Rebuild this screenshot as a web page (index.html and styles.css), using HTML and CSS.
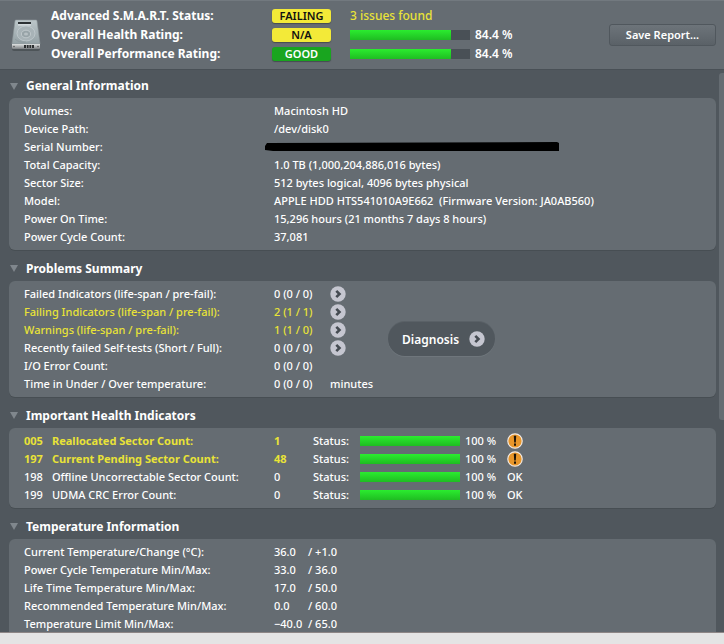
FILE: index.html
```html
<!DOCTYPE html>
<html lang="en">
<head>
  <meta charset="UTF-8">
  <meta name="viewport" content="width=device-width, initial-scale=1.0">
  <title>Drive Report</title>
  <link rel="stylesheet" href="styles.css">
</head>
<body>
  <!-- shared icons -->
  <svg class="defs" width="0" height="0" aria-hidden="true">
    <symbol id="arrow" viewBox="0 0 16 16">
      <circle cx="8" cy="8" r="7.7" fill="#c5c6d0"/>
      <path d="M6.3 4.8 L9.5 8 L6.3 11.2" fill="none" stroke="#454b52" stroke-width="2.6"/>
    </symbol>
    <symbol id="warn" viewBox="0 0 16 16">
      <circle cx="8" cy="8" r="7.2" fill="#e8962a" stroke="#f3e9e0" stroke-width="1.2"/>
      <path d="M6.8 2.8 H9.2 L8.8 9.6 H7.2 Z M7 10.6 H9 V12.8 H7 Z" fill="#1c1408"/>
    </symbol>
  </svg>

  <header class="summary">
    <svg class="drive" viewBox="0 0 32 36" aria-hidden="true">
      <defs>
        <linearGradient id="top" x1="0" y1="0" x2="0" y2="1">
          <stop offset="0" stop-color="#bcc6c9"/>
          <stop offset="1" stop-color="#94a1a5"/>
        </linearGradient>
        <linearGradient id="front" x1="0" y1="0" x2="0" y2="1">
          <stop offset="0" stop-color="#dfe2e2"/>
          <stop offset="1" stop-color="#7b7f82"/>
        </linearGradient>
      </defs>
      <rect x="2" y="30" width="28" height="4" rx="2" fill="#3e4448" opacity="0.6"/>
      <path d="M5 4 Q5 3 6 3 H26 Q27 3 27 4 L30 27 H2 Z" fill="url(#top)" stroke="#8d979b" stroke-width="0.6"/>
      <rect x="8" y="5" width="13" height="2" fill="#2c3134"/>
      <rect x="8" y="7.4" width="13" height="1" fill="#e6ecee"/>
      <ellipse cx="16" cy="16.5" rx="9" ry="7.5" fill="#a8b3b7" stroke="#c6cfd2" stroke-width="0.7"/>
      <ellipse cx="16" cy="17" rx="4.6" ry="3.8" fill="#98a4a8" stroke="#cbd3d5" stroke-width="0.7"/>
      <ellipse cx="16" cy="17" rx="2" ry="1.6" fill="#b7c0c3"/>
      <path d="M5 22 Q9 26 16 25" fill="none" stroke="#89959a" stroke-width="0.7"/>
      <path d="M2 27 H30 V31 Q30 32 29 32 H3 Q2 32 2 31 Z" fill="url(#front)"/>
      <path d="M14 28 H24 V31 H14 Z" fill="#2b2e30"/>
      <path d="M16.5 28 V31 M19 28 V31 M21.5 28 V31" stroke="#aeb2b4" stroke-width="0.8"/>
      <circle cx="4" cy="29.5" r="0.8" fill="#555"/>
      <circle cx="28" cy="29.5" r="0.8" fill="#555"/>
    </svg>
    <table class="ratings">
      <tr>
        <th scope="row">Advanced S.M.A.R.T. Status:</th>
        <td class="badge-cell"><span class="badge">FAILING</span></td>
        <td colspan="2" class="issues">3 issues found</td>
      </tr>
      <tr>
        <th scope="row">Overall Health Rating:</th>
        <td class="badge-cell"><span class="badge">N/A</span></td>
        <td class="bar-cell"><div class="bar"><div class="fill" style="width: 84.4%"></div></div></td>
        <td>84.4 %</td>
      </tr>
      <tr>
        <th scope="row">Overall Performance Rating:</th>
        <td class="badge-cell"><span class="badge good">GOOD</span></td>
        <td class="bar-cell"><div class="bar"><div class="fill" style="width: 84.4%"></div></div></td>
        <td>84.4 %</td>
      </tr>
    </table>
    <button type="button" class="save-btn">Save Report...</button>
  </header>

  <div class="scroller">
    <main class="content">
      <section>
        <h2>General Information</h2>
        <div class="panel">
          <table class="info">
            <tr><th scope="row">Volumes:</th><td>Macintosh HD</td></tr>
            <tr><th scope="row">Device Path:</th><td>/dev/disk0</td></tr>
            <tr>
              <th scope="row">Serial Number:</th>
              <td>
                <svg class="redacted" viewBox="0 0 294 10" role="img" aria-label="hidden">
                  <path d="M0 4 L2 1 L292 0 L294 1 V9 H8 L0 8 Z" fill="#000"/>
                </svg>
              </td>
            </tr>
            <tr><th scope="row">Total Capacity:</th><td>1.0 TB (1,000,204,886,016 bytes)</td></tr>
            <tr><th scope="row">Sector Size:</th><td>512 bytes logical, 4096 bytes physical</td></tr>
            <tr><th scope="row">Model:</th><td>APPLE HDD HTS541010A9E662&nbsp; (Firmware Version: JA0AB560)</td></tr>
            <tr><th scope="row">Power On Time:</th><td>15,296 hours (21 months 7 days 8 hours)</td></tr>
            <tr><th scope="row">Power Cycle Count:</th><td>37,081</td></tr>
          </table>
        </div>
      </section>

      <section>
        <h2>Problems Summary</h2>
        <div class="panel problems">
          <table class="info">
            <tr>
              <th scope="row">Failed Indicators (life-span / pre-fail):</th>
              <td class="count">0 (0 / 0)</td>
              <td><button type="button" class="go" aria-label="Show failed"><svg><use href="#arrow"/></svg></button></td>
            </tr>
            <tr class="alert">
              <th scope="row">Failing Indicators (life-span / pre-fail):</th>
              <td class="count">2 (1 / 1)</td>
              <td><button type="button" class="go" aria-label="Show failing"><svg><use href="#arrow"/></svg></button></td>
            </tr>
            <tr class="alert">
              <th scope="row">Warnings (life-span / pre-fail):</th>
              <td class="count">1 (1 / 0)</td>
              <td><button type="button" class="go" aria-label="Show warnings"><svg><use href="#arrow"/></svg></button></td>
            </tr>
            <tr>
              <th scope="row">Recently failed Self-tests (Short / Full):</th>
              <td class="count">0 (0 / 0)</td>
              <td><button type="button" class="go" aria-label="Show self-tests"><svg><use href="#arrow"/></svg></button></td>
            </tr>
            <tr>
              <th scope="row">I/O Error Count:</th>
              <td class="count">0 (0 / 0)</td>
              <td></td>
            </tr>
            <tr>
              <th scope="row">Time in Under / Over temperature:</th>
              <td class="count">0 (0 / 0)</td>
              <td>minutes</td>
            </tr>
          </table>
          <button type="button" class="diagnosis">Diagnosis <svg><use href="#arrow"/></svg></button>
        </div>
      </section>

      <section>
        <h2>Important Health Indicators</h2>
        <div class="panel">
          <table class="info health">
            <tr class="alert strong">
              <th scope="row"><span class="code">005</span>Reallocated Sector Count:</th>
              <td class="value">1</td>
              <td class="status">Status:</td>
              <td class="meter"><div class="bar"><div class="fill" style="width: 100%"></div></div></td>
              <td class="percent">100 %</td>
              <td><svg class="warn" role="img" aria-label="Warning"><use href="#warn"/></svg></td>
            </tr>
            <tr class="alert strong">
              <th scope="row"><span class="code">197</span>Current Pending Sector Count:</th>
              <td class="value">48</td>
              <td class="status">Status:</td>
              <td class="meter"><div class="bar"><div class="fill" style="width: 100%"></div></div></td>
              <td class="percent">100 %</td>
              <td><svg class="warn" role="img" aria-label="Warning"><use href="#warn"/></svg></td>
            </tr>
            <tr>
              <th scope="row"><span class="code">198</span>Offline Uncorrectable Sector Count:</th>
              <td class="value">0</td>
              <td class="status">Status:</td>
              <td class="meter"><div class="bar"><div class="fill" style="width: 100%"></div></div></td>
              <td class="percent">100 %</td>
              <td>OK</td>
            </tr>
            <tr>
              <th scope="row"><span class="code">199</span>UDMA CRC Error Count:</th>
              <td class="value">0</td>
              <td class="status">Status:</td>
              <td class="meter"><div class="bar"><div class="fill" style="width: 100%"></div></div></td>
              <td class="percent">100 %</td>
              <td>OK</td>
            </tr>
          </table>
        </div>
      </section>

      <section>
        <h2>Temperature Information</h2>
        <div class="panel">
          <table class="info">
            <tr><th scope="row">Current Temperature/Change (°C):</th><td class="temp">36.0</td><td>/ +1.0</td></tr>
            <tr><th scope="row">Power Cycle Temperature Min/Max:</th><td class="temp">33.0</td><td>/ 36.0</td></tr>
            <tr><th scope="row">Life Time Temperature Min/Max:</th><td class="temp">17.0</td><td>/ 50.0</td></tr>
            <tr><th scope="row">Recommended Temperature Min/Max:</th><td class="temp">0.0</td><td>/ 60.0</td></tr>
            <tr><th scope="row">Temperature Limit Min/Max:</th><td class="temp">−40.0</td><td>/ 65.0</td></tr>
          </table>
        </div>
      </section>
    </main>
    <div class="track"><div class="thumb"></div></div>
  </div>
  <footer class="bottom-bar"></footer>
</body>
</html>
```
FILE: styles.css
```css
* {
  box-sizing: border-box;
}
body {
  margin: 0;
  height: 100vh;
  display: flex;
  flex-direction: column;
  overflow: hidden;
  background: #50575d;
  color: #fff;
  font-family: "Noto Sans", "Open Sans", sans-serif;
  font-size: 11px;
  font-weight: 500;
  line-height: 18px;
}
.defs {
  position: absolute;
}
table {
  border-collapse: collapse;
}
th, td {
  padding: 0;
  text-align: left;
  white-space: nowrap;
}
button {
  font-family: inherit;
  color: inherit;
  cursor: pointer;
}

/* header */
.summary {
  display: flex;
  align-items: center;
  flex-shrink: 0;
  padding: 5px 8px 6px 10px;
  background: #656c72;
  border-top: 1px solid #72797f;
  border-bottom: 1px solid #495056;
}
.drive {
  width: 32px;
  height: 36px;
  margin-right: 9px;
}
.ratings {
  font-size: 12px;
  line-height: 19px;
}
.ratings tr {
  height: 19px;
}
.ratings th {
  width: 221px;
  font-size: 12px;
  font-weight: 700;
}
.ratings td {
  font-weight: 600;
}
.ratings .issues {
  color: #e9e337;
  font-weight: 500;
}
.badge-cell {
  width: 78px;
}
.badge {
  display: block;
  width: 59px;
  height: 14px;
  border-radius: 3px;
  background: #f3ea38;
  box-shadow: 0 1px 1px #454c52;
  color: #111;
  font-size: 11px;
  font-weight: 600;
  line-height: 14px;
  text-align: center;
}
.badge.good {
  background: #19a51f;
  color: #fff;
}
.bar-cell {
  width: 125px;
}
.bar {
  width: 120px;
  height: 10px;
  background: #495056;
}
.fill {
  height: 100%;
  background: linear-gradient(#2bec2f, #1fbd22);
}
.save-btn {
  width: 107px;
  height: 22px;
  margin-left: auto;
  padding: 0;
  border: 1px solid #50575d;
  border-radius: 3px;
  background: linear-gradient(#6d747a, #5a6167);
  font-size: 11px;
  font-weight: 600;
}

/* report */
.scroller {
  display: flex;
  flex: 1;
  min-height: 0;
  overflow: hidden;
}
.content {
  flex: 1;
  padding: 0 3px 0 9px;
}
h2 {
  display: flex;
  align-items: center;
  height: 31px;
  margin: 0;
  padding-top: 6px;
  font-size: 12px;
  font-weight: 700;
}
h2::before {
  content: "";
  width: 0;
  margin: 0 8px 0 1px;
  border: 4px solid transparent;
  border-top: 7px solid #80878d;
  border-bottom: 0;
}
section:first-child h2 {
  height: 28px;
  padding-top: 4px;
}
.panel {
  padding: 4px 15px;
  border-radius: 6px;
  background: #656c72;
  box-shadow: 0 1px 0 #474e53;
}
.info tr {
  height: 18px;
}
.info th {
  width: 250px;
  font-weight: 500;
}
.redacted {
  display: block;
  width: 294px;
  height: 10px;
  margin-left: -9px;
}
.alert th, .alert .count, .alert .value {
  color: #e9e337;
}
.strong th, .strong .value {
  font-weight: 700;
}
.count {
  width: 56px;
}
.problems {
  display: flex;
  align-items: center;
  gap: 15px;
}
.go {
  display: block;
  width: 16px;
  height: 16px;
  padding: 0;
  border: 0;
  background: none;
}
.go svg, .diagnosis svg, .warn {
  display: block;
  width: 16px;
  height: 16px;
}
.diagnosis {
  display: flex;
  align-items: center;
  justify-content: space-between;
  width: 107px;
  height: 34px;
  padding: 0 10px 0 14px;
  border: 0;
  border-radius: 17px;
  background: #50575d;
  box-shadow: 0 1px 0 #6f767c, 0 -1px 0 #5a6167;
  font-size: 12px;
  font-weight: 600;
}
.code {
  display: inline-block;
  width: 28px;
}
.value {
  width: 39px;
}
.status {
  width: 47px;
}
.meter {
  width: 105px;
}
.meter .bar {
  width: 100px;
}
.percent {
  width: 42px;
}
.temp {
  width: 34px;
}
.track {
  width: 5px;
  padding-top: 3px;
}
.thumb {
  height: 62%;
  border-radius: 3px 0 0 3px;
  background: #656c72;
}
.bottom-bar {
  flex-shrink: 0;
  height: 12px;
  border-top: 1px solid #8d8686;
  background: #e4e4e4;
}
```
